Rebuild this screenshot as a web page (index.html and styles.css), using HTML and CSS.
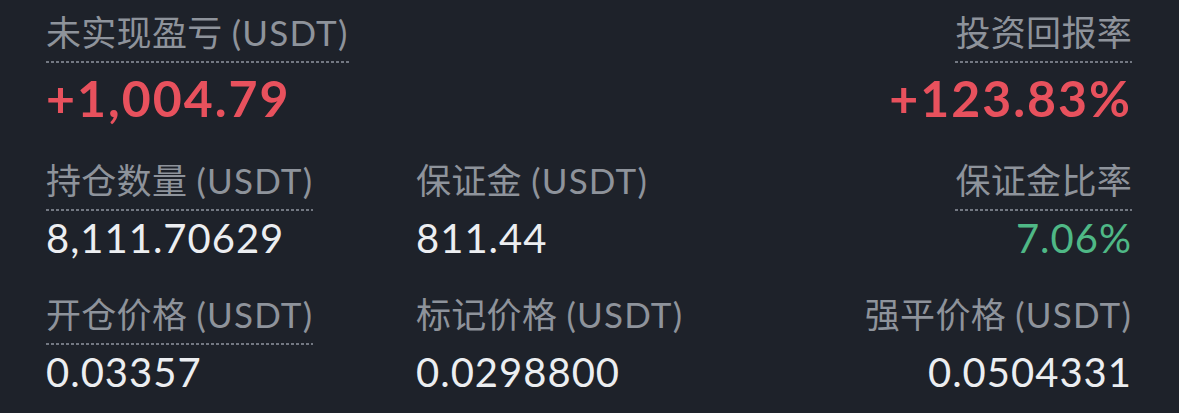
FILE: index.html
```html
<!DOCTYPE html>
<html lang="zh-CN">
<head>
    <meta charset="UTF-8">
    <meta name="viewport" content="width=device-width, initial-scale=1.0">
    <title>仓位详情</title>
    <link rel="stylesheet" href="styles.css">
</head>
<body>
    <div class="position">
        <div class="cell">
            <span class="label dotted">未实现盈亏 <span class="unit">(USDT)</span></span>
            <span class="value big red">+1,004.79</span>
        </div>
        <div class="cell"></div>
        <div class="cell right">
            <span class="label dotted">投资回报率</span>
            <span class="value big red">+123.83%</span>
        </div>

        <div class="cell">
            <span class="label dotted">持仓数量 <span class="unit">(USDT)</span></span>
            <span class="value">8,111.70629</span>
        </div>
        <div class="cell">
            <span class="label">保证金 <span class="unit">(USDT)</span></span>
            <span class="value">811.44</span>
        </div>
        <div class="cell right">
            <span class="label dotted">保证金比率</span>
            <span class="value green">7.06%</span>
        </div>

        <div class="cell">
            <span class="label dotted">开仓价格 <span class="unit">(USDT)</span></span>
            <span class="value">0.03357</span>
        </div>
        <div class="cell">
            <span class="label">标记价格 <span class="unit">(USDT)</span></span>
            <span class="value">0.0298800</span>
        </div>
        <div class="cell right">
            <span class="label">强平价格 <span class="unit">(USDT)</span></span>
            <span class="value">0.0504331</span>
        </div>
    </div>
</body>
</html>
```

FILE: styles.css
```css
body {
    margin: 0;
    background-color: #1e222a;
    font-family: Lato, "Noto Sans CJK SC", sans-serif;
    color: #eceef1;
}
.position {
    display: grid;
    grid-template-columns: 370px 1fr auto;
    row-gap: 32px;
    padding: 12px 47px 0 46px;
}
.cell {
    display: flex;
    flex-direction: column;
    align-items: flex-start;
}
.cell.right {
    align-items: flex-end;
}
.label {
    font-size: 35px;
    line-height: 40px;
    letter-spacing: 0.3px;
    color: #8e939b;
    padding-bottom: 11px;
}
.unit {
    letter-spacing: 1.2px;
}
/* dashed underline under explained labels */
.label.dotted {
    background-image: linear-gradient(to right, #737882 60%, transparent 60%);
    background-size: 5px 2px;
    background-repeat: repeat-x;
    background-position: left bottom;
}
.value {
    font-size: 40px;
    line-height: 47px;
    letter-spacing: 1px;
    margin-top: 4px;
}
.value.big {
    font-size: 50px;
    line-height: 60px;
    font-weight: 700;
    letter-spacing: 2px;
    margin-top: 5px;
}
.red {
    color: #e8515d;
}
.green {
    color: #4fb886;
}
```
